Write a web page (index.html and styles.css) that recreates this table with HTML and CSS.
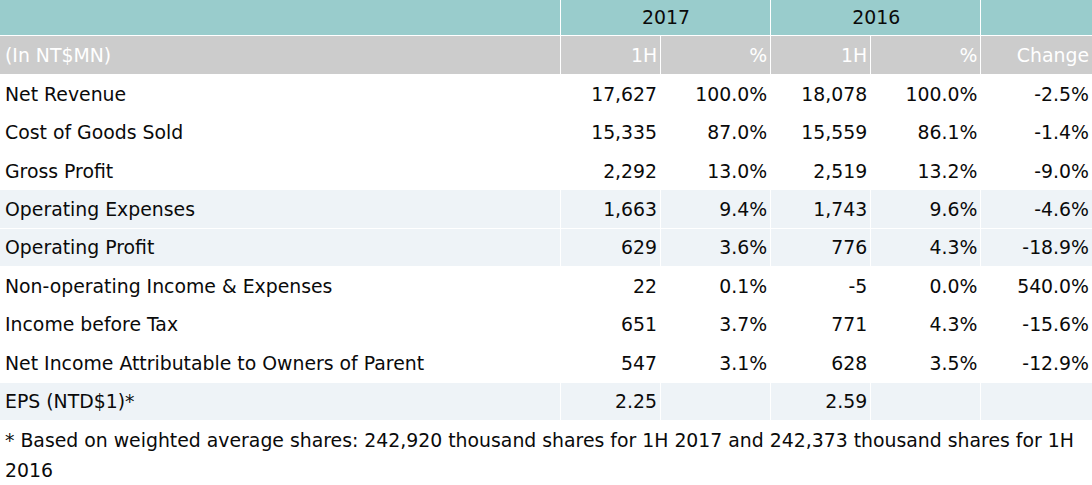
FILE: index.html
```html
<!DOCTYPE html>
<html>
<head>
<meta charset="utf-8">
<link rel="stylesheet" href="styles.css">
</head>
<body>
<table class="fin">
  <colgroup>
    <col class="c-label">
    <col class="c-num">
    <col class="c-pct">
    <col class="c-num">
    <col class="c-pct">
    <col class="c-chg">
  </colgroup>
  <thead>
    <tr class="year-row">
      <th></th>
      <th colspan="2">2017</th>
      <th colspan="2">2016</th>
      <th></th>
    </tr>
    <tr class="sub-row">
      <th class="lbl">(In NT$MN)</th>
      <th>1H</th>
      <th>%</th>
      <th>1H</th>
      <th>%</th>
      <th>Change</th>
    </tr>
  </thead>
  <tbody>
    <tr><td class="lbl">Net Revenue</td><td>17,627</td><td>100.0%</td><td>18,078</td><td>100.0%</td><td>-2.5%</td></tr>
    <tr><td class="lbl">Cost of Goods Sold</td><td>15,335</td><td>87.0%</td><td>15,559</td><td>86.1%</td><td>-1.4%</td></tr>
    <tr><td class="lbl">Gross Profit</td><td>2,292</td><td>13.0%</td><td>2,519</td><td>13.2%</td><td>-9.0%</td></tr>
    <tr class="shade"><td class="lbl">Operating Expenses</td><td>1,663</td><td>9.4%</td><td>1,743</td><td>9.6%</td><td>-4.6%</td></tr>
    <tr class="shade"><td class="lbl">Operating Profit</td><td>629</td><td>3.6%</td><td>776</td><td>4.3%</td><td>-18.9%</td></tr>
    <tr><td class="lbl">Non-operating Income &amp; Expenses</td><td>22</td><td>0.1%</td><td>-5</td><td>0.0%</td><td>540.0%</td></tr>
    <tr><td class="lbl">Income before Tax</td><td>651</td><td>3.7%</td><td>771</td><td>4.3%</td><td>-15.6%</td></tr>
    <tr><td class="lbl">Net Income Attributable to Owners of Parent</td><td>547</td><td>3.1%</td><td>628</td><td>3.5%</td><td>-12.9%</td></tr>
    <tr class="shade"><td class="lbl">EPS (NTD$1)*</td><td>2.25</td><td></td><td>2.59</td><td></td><td></td></tr>
  </tbody>
</table>
<p class="note">* Based on weighted average shares: 242,920 thousand shares for 1H 2017 and 242,373 thousand shares for 1H 2016</p>
</body>
</html>
```

FILE: styles.css
```css
html, body {
  margin: 0;
  padding: 0;
  background: #ffffff;
}

body {
  font-family: "DejaVu Sans", Verdana, sans-serif;
  font-size: 18.85px;
  color: #0a0a0a;
}

.fin {
  width: 1092px;
  border-collapse: collapse;
  table-layout: fixed;
}

.c-label { width: 560px; }
.c-num { width: 100px; }
.c-pct { width: 110px; }
.c-chg { width: 111px; }

.fin th,
.fin td {
  padding: 0 3px 0 4px;
  text-align: right;
  font-weight: normal;
  white-space: nowrap;
  border-right: 1px solid #ffffff;
  border-bottom: 1px solid #ffffff;
  line-height: 22px;
}

.fin th:last-child,
.fin td:last-child {
  border-right: none;
}

.fin .lbl {
  text-align: left;
  padding-left: 5px;
}

.year-row th {
  background: #99cccc;
  height: 35px;
  text-align: center;
  color: #0a0a0a;
}

.sub-row th {
  background: #cccccc;
  color: #ffffff;
  height: 37px;
  padding-top: 1px;
}

.fin tbody td {
  height: 35.44px;
  padding-top: 2px;
}

.fin tbody tr:last-child td {
  border-bottom: none;
}

.fin tr.shade td {
  background: #eef3f7;
}

.note {
  margin: 6px 0 0 0;
  padding: 0 5px;
  line-height: 30px;
}
```
